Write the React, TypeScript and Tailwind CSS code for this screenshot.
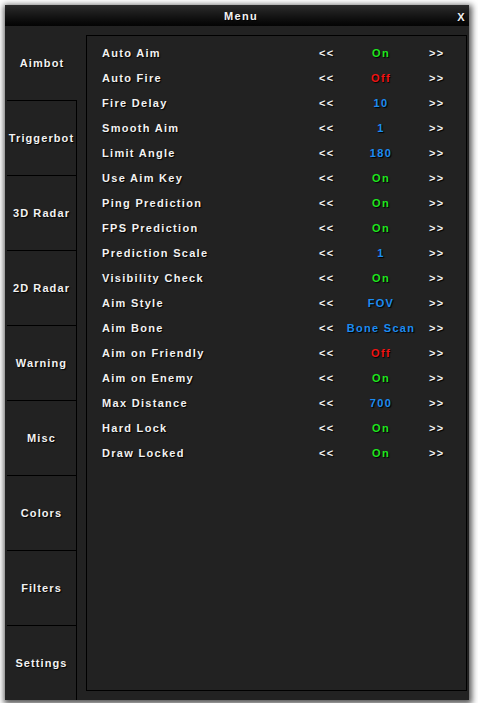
const tabs = ["Aimbot", "Triggerbot", "3D Radar", "2D Radar", "Warning", "Misc", "Colors", "Filters", "Settings"];

type Opt = { label: string; value: string; tone: "on" | "off" | "num" };

const options: Opt[] = [
  { label: "Auto Aim", value: "On", tone: "on" },
  { label: "Auto Fire", value: "Off", tone: "off" },
  { label: "Fire Delay", value: "10", tone: "num" },
  { label: "Smooth Aim", value: "1", tone: "num" },
  { label: "Limit Angle", value: "180", tone: "num" },
  { label: "Use Aim Key", value: "On", tone: "on" },
  { label: "Ping Prediction", value: "On", tone: "on" },
  { label: "FPS Prediction", value: "On", tone: "on" },
  { label: "Prediction Scale", value: "1", tone: "num" },
  { label: "Visibility Check", value: "On", tone: "on" },
  { label: "Aim Style", value: "FOV", tone: "num" },
  { label: "Aim Bone", value: "Bone Scan", tone: "num" },
  { label: "Aim on Friendly", value: "Off", tone: "off" },
  { label: "Aim on Enemy", value: "On", tone: "on" },
  { label: "Max Distance", value: "700", tone: "num" },
  { label: "Hard Lock", value: "On", tone: "on" },
  { label: "Draw Locked", value: "On", tone: "on" },
];

const toneClass = {
  on: "text-[#1ee61e]",
  off: "text-[#f01414]",
  num: "text-[#1c8cf2]",
};

export default function App() {
  return (
    <div className="w-[478px] h-[703px] bg-white pt-[5px] pl-[5px] font-['Liberation_Sans',sans-serif] font-bold text-[11px] tracking-[1.3px] text-[#f2f2f2] [text-shadow:1px_1px_1px_#000]">
      <div className="w-[464px] h-[695px] bg-[#222222] flex flex-col shadow-[1px_2px_6px_2px_rgba(0,0,0,0.65)]">
        {/* title bar */}
        <div className="h-[21px] shrink-0 flex items-center pt-[2px] relative bg-gradient-to-b from-[#2c2c2c] to-[#040404]">
          <div className="flex-1 text-center pl-[8px]">Menu</div>
          <div className="absolute right-[3px] top-[4px]">X</div>
        </div>
        <div className="flex flex-1 min-h-0">
          {/* sidebar */}
          <div className="pl-[2px] flex flex-col w-[72px] shrink-0 tracking-[1.1px]">
            {tabs.map((t, i) => (
              <div
                key={t}
                className={
                  i === 0
                    ? "h-[74px] w-[70px] pt-[1px] flex items-center justify-center"
                    : "h-[75px] w-[70px] pt-[1px] flex items-center justify-center border-t border-r border-black"
                }
              >
                {t}
              </div>
            ))}
          </div>
          {/* options panel */}
          <div className="flex-1 pl-[9px] pr-[2px] pt-[9px] pb-[9px]">
            <div className="h-full border border-black pt-[5px] pl-[15px]">
              {options.map((o) => (
                <div key={o.label} className="h-[25px] flex items-center">
                  <div className="w-[217px]">{o.label}</div>
                  <div className="w-[14px]">&lt;&lt;</div>
                  <div className={"w-[96px] text-center " + toneClass[o.tone]}>{o.value}</div>
                  <div>&gt;&gt;</div>
                </div>
              ))}
            </div>
          </div>
        </div>
      </div>
    </div>
  );
}
